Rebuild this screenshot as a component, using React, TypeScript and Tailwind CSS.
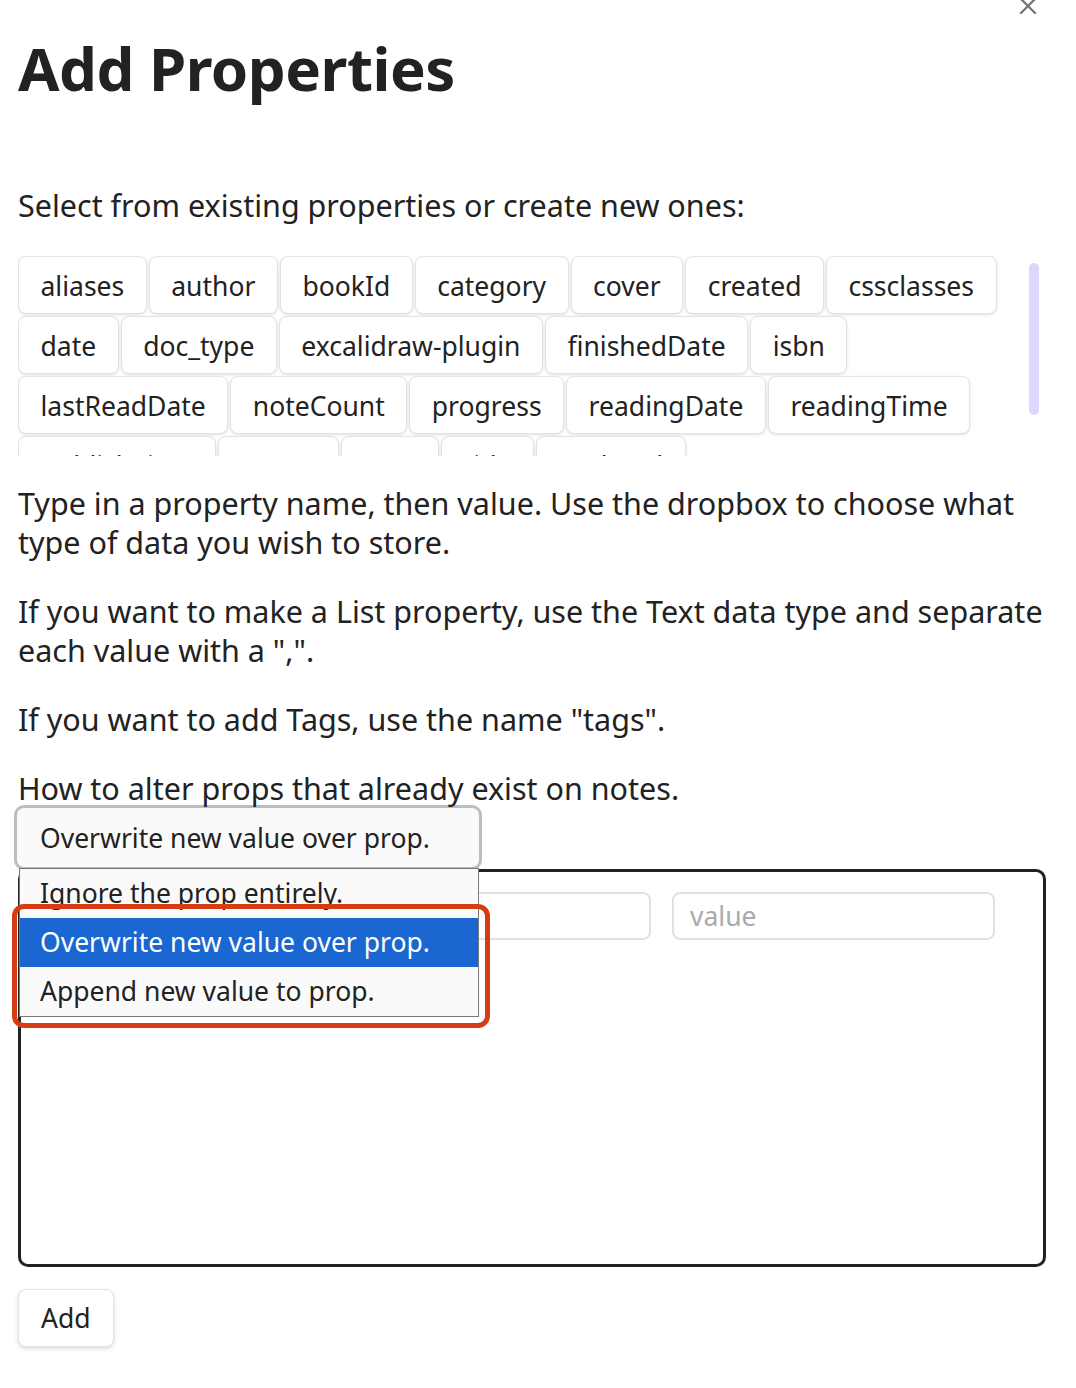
import React from 'react';
import { X } from 'lucide-react';

const rows: string[][] = [
  ['aliases', 'author', 'bookId', 'category', 'cover', 'created', 'cssclasses'],
  ['date', 'doc_type', 'excalidraw-plugin', 'finishedDate', 'isbn'],
  ['lastReadDate', 'noteCount', 'progress', 'readingDate', 'readingTime'],
  ['publishTime', 'status', 'tags', 'title', 'updated'],
];

const Tag: React.FC<{ label: string }> = ({ label }) => (
  <button className="h-[58px] px-[21.5px] pt-[2px] bg-white border border-[#e3e3e3] rounded-[8px] shadow-[0_1px_3px_rgba(0,0,0,0.12)] text-[26.5px] leading-none text-[#222] whitespace-nowrap">
    {label}
  </button>
);

export default function App() {
  return (
    <div
      className="relative w-[1076px] h-[1388px] overflow-hidden bg-white text-[#222] px-[18px]"
      style={{ fontFamily: '"Noto Sans", "Open Sans", sans-serif' }}
    >
      <X size={28} strokeWidth={2} className="absolute right-[34px] top-[-8px] text-[#777]" />

      <h1 className="pt-[32px] text-[60px] leading-[72px] font-bold tracking-[-0.5px]">Add Properties</h1>

      <p className="mt-[82px] text-[30.5px] leading-[39px]">Select from existing properties or create new ones:</p>

      <div className="mt-[31px] flex">
        <div className="w-[1000px] h-[200px] overflow-hidden flex flex-col gap-[2px]">
          {rows.map((r, i) => (
            <div key={i} className="flex gap-[2px]">
              {r.map((t) => (
                <Tag key={t} label={t} />
              ))}
            </div>
          ))}
        </div>
        <div className="ml-[11px] mt-[7px] w-[10px] h-[152px] rounded-full bg-[#ddd6fe]" />
      </div>

      <div className="mt-[28px] text-[30.5px] leading-[39px] flex flex-col gap-[30px] w-[1036px]">
        <p>Type in a property name, then value. Use the dropbox to choose what type of data you wish to store.</p>
        <p>If you want to make a List property, use the Text data type and separate each value with a ",".</p>
        <p>If you want to add Tags, use the name "tags".</p>
        <p>How to alter props that already exist on notes.</p>
      </div>

      <div className="mt-[-3px] ml-[-4px] w-[468px] h-[65px] border-[3px] border-[#bdbdbd] rounded-[10px] bg-[#fafafa] flex items-center pl-[23px] pt-[3px] text-[26.5px]">
        Overwrite new value over prop.
      </div>

      <div className="w-[1028px] h-[398px] border-[3px] border-[#222] rounded-[10px] mt-[-1px] px-[20px] pt-[20px]">
        <div className="flex gap-[21px]">
          <input className="w-[610px] h-[48px] border-2 border-[#e2e2e2] rounded-[8px] px-[16px] text-[26.5px] outline-none" />
          <input
            placeholder="value"
            className="w-[323px] h-[48px] border-2 border-[#e2e2e2] rounded-[8px] px-[16px] text-[26.5px] outline-none placeholder:text-[#aaa]"
          />
        </div>
      </div>

      <button className="mt-[22px] h-[58px] px-[22px] pt-[2px] bg-white border border-[#e3e3e3] rounded-[8px] shadow-[0_2px_4px_rgba(0,0,0,0.15)] text-[26.5px]">
        Add
      </button>

      {/* open dropdown list */}
      <div className="absolute left-[19px] top-[868px] w-[460px] border border-[#767676] bg-[#fafafa] text-[26.5px]">
        <div className="h-[49px] flex items-center pl-[20px]">Ignore the prop entirely.</div>
        <div className="h-[49px] flex items-center pl-[20px] bg-[#1a67d2] text-white">Overwrite new value over prop.</div>
        <div className="h-[49px] flex items-center pl-[20px]">Append new value to prop.</div>
      </div>

      {/* annotation highlight */}
      <div className="absolute left-[12px] top-[904px] w-[478px] h-[124px] border-[5px] border-[#d63c12] rounded-[12px]" />
    </div>
  );
}
